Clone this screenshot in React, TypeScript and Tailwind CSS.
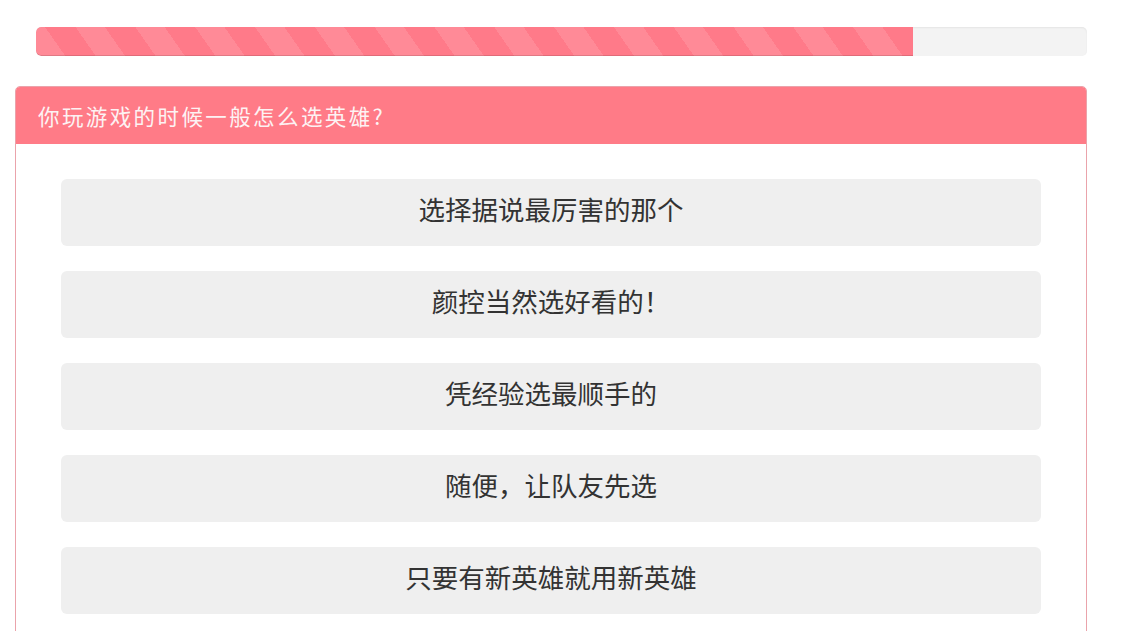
const options = [
  "选择据说最厉害的那个",
  "颜控当然选好看的！",
  "凭经验选最顺手的",
  "随便，让队友先选",
  "只要有新英雄就用新英雄",
];

const progress = 83.45;

export default function App() {
  return (
    <div className="min-h-screen bg-white pt-[27px] font-['Noto_Sans_CJK_SC','Noto_Sans',sans-serif]">
      {/* progress */}
      <div className="ml-[36px] mr-[34px] h-[29px] overflow-hidden rounded-[5px] bg-[#f3f3f3] shadow-[inset_0_1px_2px_rgba(0,0,0,0.06)]">
        <div
          className="h-full rounded-l-[5px] bg-[#ff7a89] bg-[repeating-linear-gradient(55deg,rgba(255,255,255,0.12)_0px,rgba(255,255,255,0.12)_24px,transparent_24px,transparent_49px)] shadow-[inset_0_-1px_0_rgba(0,0,0,0.12)]"
          style={{ width: `${progress}%` }}
        />
      </div>

      {/* question card */}
      <div className="ml-[15px] mr-[34px] mt-[30px] rounded-t-[5px] border border-[#eaa3ab] bg-white">
        <div className="flex h-[57px] items-center rounded-t-[4px] bg-[#ff7b87] px-[22px] pt-[2px] text-[21.5px] tracking-[2.4px] text-[#fdf2f3]">
          你玩游戏的时候一般怎么选英雄?
        </div>
        <div className="flex flex-col gap-[25px] px-[45px] pb-[30px] pt-[35px]">
          {options.map((o) => (
            <button
              key={o}
              className="flex h-[67px] items-center justify-center rounded-[6px] bg-[#efefef] pb-[7px] text-[26.5px] text-[#333]"
            >
              {o}
            </button>
          ))}
        </div>
      </div>
    </div>
  );
}
